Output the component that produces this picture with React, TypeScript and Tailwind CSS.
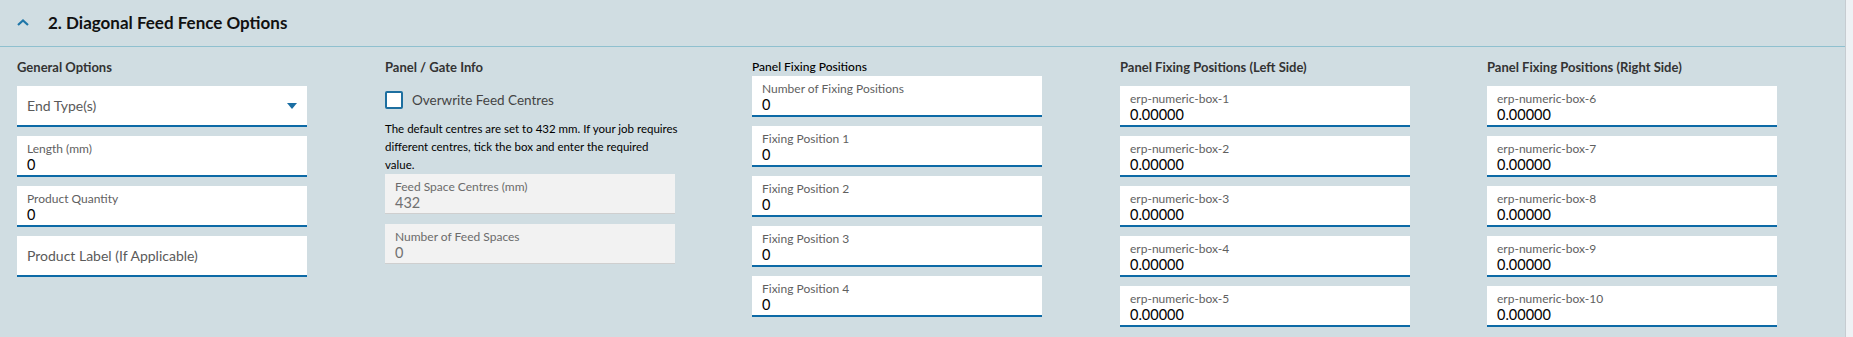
import React from "react";

const font = { fontFamily: "Lato, 'Open Sans', sans-serif" };

function Field({ label, value }: { label: string; value: string }) {
  return (
    <div className="h-[41px] w-[290px] border-b-2 border-[#0d6aa6] bg-white pl-[10px] pt-[5px]">
      <div className="text-[12px] leading-[15px] text-[#5f5f5f]">{label}</div>
      <div className="text-[14.5px] leading-[17px] text-black">{value}</div>
    </div>
  );
}

function ReadOnlyField({ label, value }: { label: string; value: string }) {
  return (
    <div className="h-[40px] w-[290px] border-b border-[#cfcfcf] bg-[#f2f2f2] pl-[10px] pt-[5px]">
      <div className="text-[12px] leading-[15px] text-[#6b6b6b]">{label}</div>
      <div className="text-[14.5px] leading-[17px] text-[#707070]">{value}</div>
    </div>
  );
}

function PlainField({ placeholder, dropdown }: { placeholder: string; dropdown?: boolean }) {
  return (
    <div className="flex h-[41px] w-[290px] items-center justify-between border-b-2 border-[#0d6aa6] bg-white pl-[10px] pr-[10px]">
      <span className="text-[14px] text-[#5a5a5a]">{placeholder}</span>
      {dropdown && (
        <svg width="10" height="6" viewBox="0 0 10 6">
          <path d="M0 0 L10 0 L5 6 Z" fill="#1a6ea3" />
        </svg>
      )}
    </div>
  );
}

function Heading({ children }: { children: React.ReactNode }) {
  return (
    <div className="h-[29px] text-[13px] font-bold leading-[20px] text-[#333]">{children}</div>
  );
}

export default function App() {
  const left = [1, 2, 3, 4, 5];
  const right = [6, 7, 8, 9, 10];
  return (
    <div className="flex h-[337px] w-full bg-[#d0dde2]" style={font}>
      <div className="flex-1">
        {/* section header */}
        <div className="flex h-[47px] items-center border-b border-[#8fc0cf] pl-[17px]">
          <svg width="12" height="7" viewBox="0 0 12 7" className="mb-[2px]">
            <path d="M1 6 L6 1.5 L11 6" fill="none" stroke="#1f76a8" strokeWidth="2.2" />
          </svg>
          <h2 className="ml-[19px] text-[17px] font-bold text-[#111]">
            2. Diagonal Feed Fence Options
          </h2>
        </div>

        <div className="grid grid-cols-[368px_367px_368px_367px_1fr] pl-[17px] pt-[10px]">
          {/* General options */}
          <div className="flex flex-col">
            <Heading>General Options</Heading>
            <div className="flex flex-col gap-[9px]">
              <PlainField placeholder="End Type(s)" dropdown />
              <Field label="Length (mm)" value="0" />
              <Field label="Product Quantity" value="0" />
              <PlainField placeholder="Product Label (If Applicable)" />
            </div>
          </div>

          {/* Panel / gate info */}
          <div className="flex flex-col">
            <Heading>Panel / Gate Info</Heading>
            <div className="flex h-[28px] items-center">
              <span className="h-[18px] w-[18px] rounded-[2px] border-2 border-[#1d6fa0] bg-white" />
              <span className="ml-[9px] text-[13.5px] text-[#444]">Overwrite Feed Centres</span>
            </div>
            <p className="mt-[6px] text-[11.5px] leading-[18px] text-black">
              <span className="block whitespace-nowrap">
                The default centres are set to 432 mm. If your job requires
              </span>
              <span className="block whitespace-nowrap">
                different centres, tick the box and enter the required
              </span>
              <span className="block whitespace-nowrap">value.</span>
            </p>
            <div className="flex flex-col gap-[10px]">
              <ReadOnlyField label="Feed Space Centres (mm)" value="432" />
              <ReadOnlyField label="Number of Feed Spaces" value="0" />
            </div>
          </div>

          {/* Panel fixing positions */}
          <div className="flex flex-col">
            <div className="h-[19px] text-[12px] font-medium leading-[19px] text-black">
              Panel Fixing Positions
            </div>
            <div className="flex flex-col gap-[9px]">
              <Field label="Number of Fixing Positions" value="0" />
              {[1, 2, 3, 4].map((n) => (
                <Field key={n} label={`Fixing Position ${n}`} value="0" />
              ))}
            </div>
          </div>

          {/* Left side */}
          <div className="flex flex-col">
            <Heading>Panel Fixing Positions (Left Side)</Heading>
            <div className="flex flex-col gap-[9px]">
              {left.map((n) => (
                <Field key={n} label={`erp-numeric-box-${n}`} value="0.00000" />
              ))}
            </div>
          </div>

          {/* Right side */}
          <div className="flex flex-col">
            <Heading>Panel Fixing Positions (Right Side)</Heading>
            <div className="flex flex-col gap-[9px]">
              {right.map((n) => (
                <Field key={n} label={`erp-numeric-box-${n}`} value="0.00000" />
              ))}
            </div>
          </div>
        </div>
      </div>
      <div className="w-[8px] border-l border-[#c6ccd1] bg-[#eef2f5]" />
    </div>
  );
}
